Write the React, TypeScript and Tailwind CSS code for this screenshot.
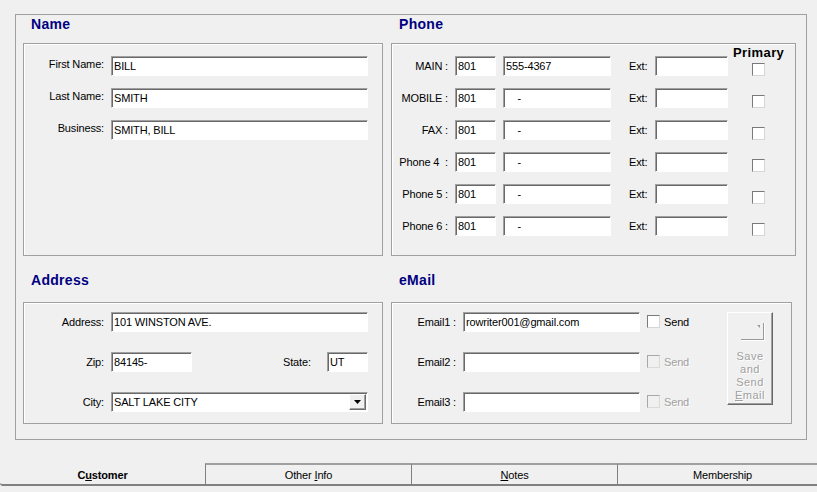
import clsx from 'clsx'

const sunken =
  'bg-white border border-t-[#a0a0a0] border-l-[#a0a0a0] border-b-white border-r-white shadow-[inset_1px_1px_0_#696969]'
const raised =
  'bg-[#f0f0f0] border border-t-white border-l-white border-b-[#696969] border-r-[#696969] shadow-[inset_-1px_-1px_0_#a0a0a0]'

function Field({ value = '', className }: { value?: string; className?: string }) {
  return (
    <div className={clsx(sunken, 'h-[20px] pl-[2px] pt-[1px] leading-[16px] whitespace-pre overflow-hidden', className)}>
      {value}
    </div>
  )
}

function Check({ disabled }: { disabled?: boolean }) {
  return (
    <div
      className={clsx(
        'w-[13px] h-[13px] border shrink-0',
        disabled
          ? 'bg-[#f0f0f0] border-t-[#a8a8a8] border-l-[#a8a8a8] border-b-[#dadada] border-r-[#dadada]'
          : 'bg-white border-t-[#7a7a7a] border-l-[#7a7a7a] border-b-[#d6d6d6] border-r-[#d6d6d6]'
      )}
    />
  )
}

function GroupTitle({ children, className }: { children: string; className?: string }) {
  return (
    <div className={clsx('pl-[8px] text-[14px] leading-[16px] font-bold text-[#000080] tracking-[0.3px]', className)}>
      {children}
    </div>
  )
}

const groupBox = 'border border-[#a0a0a0] shadow-[inset_1px_1px_0_#fff]'
const tab =
  'shrink-0 border-t-2 border-l border-b-2 border-t-[#a0a0a0] border-l-[#808080] border-b-[#808080] flex items-center justify-center pt-[1px]'

const phones = [
  { label: 'MAIN :', num: '555-4367' },
  { label: 'MOBILE :', num: '    -' },
  { label: 'FAX :', num: '    -' },
  { label: 'Phone 4  :', num: '    -' },
  { label: 'Phone 5 :', num: '    -' },
  { label: 'Phone 6 :', num: '    -' },
]

const emails = [
  { label: 'Email1 :', value: 'rowriter001@gmail.com', disabled: false },
  { label: 'Email2 :', value: '', disabled: true },
  { label: 'Email3 :', value: '', disabled: true },
]

export default function App() {
  return (
    <div className="w-[817px] h-[492px] bg-[#f0f0f0] overflow-hidden text-[11px] tracking-[-0.15px] text-black font-['Liberation_Sans',Arial,sans-serif]">
      <div className="pt-[14px] pl-[15px]">
        <div className="w-[792px] h-[426px] border border-[#a0a0a0] pl-[7px]">
          {/* top row */}
          <div className="flex gap-[8px]">
            <div className="w-[360px]">
              <GroupTitle className="h-[28px] pt-[1px]">Name</GroupTitle>
              <div className={clsx(groupBox, 'h-[213px] pt-[12px] flex flex-col gap-[12px]')}>
                {[
                  ['First Name:', 'BILL'],
                  ['Last Name:', 'SMITH'],
                  ['Business:', 'SMITH, BILL'],
                ].map(([l, v]) => (
                  <div key={l} className="flex items-start">
                    <div className="w-[80px] text-right leading-[16px]">{l}</div>
                    <Field value={v} className="ml-[7px] w-[257px]" />
                  </div>
                ))}
              </div>
            </div>
            <div className="w-[405px]">
              <GroupTitle className="h-[28px] pt-[1px]">Phone</GroupTitle>
              <div className={clsx(groupBox, 'relative h-[213px] pt-[12px] flex flex-col gap-[12px]')}>
                <div className="absolute top-[1px] left-[341px] text-[13px] leading-[15px] font-bold tracking-[0.4px]">
                  Primary
                </div>
                {phones.map((p) => (
                  <div key={p.label} className="flex items-start">
                    <div className="w-[56px] text-right leading-[20px] whitespace-pre">{p.label}</div>
                    <Field value="801" className="ml-[7px] w-[41px]" />
                    <Field value={p.num} className="ml-[7px] w-[108px]" />
                    <div className="ml-[18px] w-[26px] leading-[20px]">Ext:</div>
                    <Field className="w-[73px]" />
                    <div className="ml-[24px] mt-[7px]">
                      <Check />
                    </div>
                  </div>
                ))}
              </div>
            </div>
          </div>

          {/* bottom row */}
          <div className="flex gap-[8px]">
            <div className="w-[360px]">
              <GroupTitle className="h-[46px] pt-[16px]">Address</GroupTitle>
              <div className={clsx(groupBox, 'h-[122px] pt-[9px] flex flex-col gap-[20px]')}>
                <div className="flex items-center">
                  <div className="w-[80px] text-right">Address:</div>
                  <Field value="101 WINSTON AVE." className="ml-[7px] w-[257px]" />
                </div>
                <div className="flex items-center">
                  <div className="w-[80px] text-right">Zip:</div>
                  <Field value="84145-" className="ml-[7px] w-[81px]" />
                  <div className="ml-[91px] w-[44px]">State:</div>
                  <Field value="UT" className="w-[41px]" />
                </div>
                <div className="flex items-center">
                  <div className="w-[80px] text-right">City:</div>
                  <div className={clsx(sunken, 'ml-[7px] w-[257px] h-[20px] flex p-[1px] pl-[2px]')}>
                    <div className="flex-1 leading-[16px]">SALT LAKE CITY</div>
                    <div className={clsx(raised, 'w-[17px] h-[16px] flex items-center justify-center')}>
                      <svg width="7" height="4" viewBox="0 0 7 4">
                        <path d="M0 0h7L3.5 4z" fill="#000" />
                      </svg>
                    </div>
                  </div>
                </div>
              </div>
            </div>
            <div className="w-[401px]">
              <GroupTitle className="h-[46px] pt-[16px]">eMail</GroupTitle>
              <div className={clsx(groupBox, 'h-[122px] pt-[9px] flex')}>
                <div className="w-[335px] flex flex-col gap-[20px]">
                  {emails.map((e) => (
                    <div key={e.label} className="flex items-start">
                      <div className="w-[64px] text-right leading-[20px]">{e.label}</div>
                      <Field value={e.value} className="ml-[7px] w-[177px]" />
                      <div className="ml-[7px] mt-[3px] flex items-center">
                        <Check disabled={e.disabled} />
                        <span
                          className={clsx(
                            'ml-[4px] leading-[12px]',
                            e.disabled && 'text-[#a0a0a0] [text-shadow:1px_1px_0_#fff]'
                          )}
                        >
                          Send
                        </span>
                      </div>
                    </div>
                  ))}
                </div>
                <div className={clsx(raised, 'w-[46px] h-[93px] flex flex-col items-center')}>
                  <svg width="44" height="30" viewBox="0 0 44 30" className="block">
                    <path d="M13 26.5h23M35.5 10v17" stroke="#999" strokeWidth="1" fill="none" />
                    <path d="M13 27.5h24.5M36.5 10v18" stroke="#fff" strokeWidth="1" fill="none" />
                    <path d="M29 12h3v3z" fill="#999" />
                  </svg>
                  <div className="mt-[7px] text-center leading-[13px] tracking-[0.5px] text-[#a0a0a0] [text-shadow:1px_1px_0_#fff]">
                    <div>Save</div>
                    <div>and</div>
                    <div>Send</div>
                    <div>
                      <span className="underline">E</span>mail
                    </div>
                  </div>
                </div>
              </div>
            </div>
          </div>
        </div>
      </div>

      {/* tabs */}
      <div className="mt-[23px] flex h-[23px]">
        <div className="w-[205px] shrink-0 border-b-2 border-b-[#808080] rounded-bl-[3px] flex items-center justify-center pt-[3px] font-bold">
          C<span className="underline">u</span>stomer
        </div>
        <div className={clsx(tab, 'w-[206px]')}>
          Other <span className="underline ml-[3px]">I</span>nfo
        </div>
        <div className={clsx(tab, 'w-[206px]')}>
          <span className="underline">N</span>otes
        </div>
        <div className={clsx(tab, 'w-[210px]')}>Membership</div>
      </div>
    </div>
  )
}
